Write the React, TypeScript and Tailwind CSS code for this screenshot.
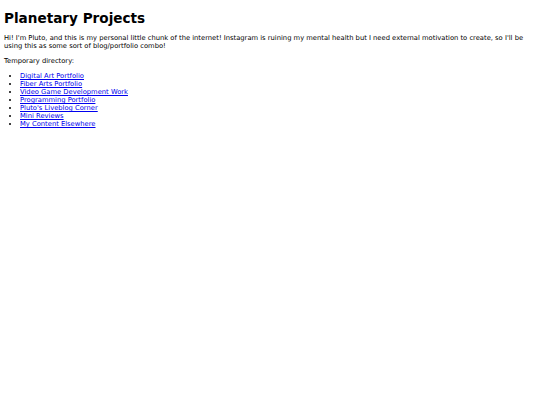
import * as React from "react";

const links = [
  "Digital Art Portfolio",
  "Fiber Arts Portfolio",
  "Video Game Development Work",
  "Programming Portfolio",
  "Pluto's Liveblog Corner",
  "Mini Reviews",
  "My Content Elsewhere",
];

export default function App() {
  return (
    <div className="min-h-screen bg-white p-[4px] text-[6.75px] leading-[8px] text-black [font-family:Verdana,'DejaVu_Sans',sans-serif]">
      <h1 className="mt-[5.5px] mb-[7.5px] text-[13.6px] font-bold leading-[17px]">
        Planetary Projects
      </h1>
      <p className="my-[7px]">
        Hi! I'm Pluto, and this is my personal little chunk of the internet!
        Instagram is ruining my mental health but I need external motivation to
        create, so I'll be using this as some sort of blog/portfolio combo!
      </p>
      <p className="my-[7px]">Temporary directory:</p>
      <ul className="my-[7px] list-disc pl-[16px]">
        {links.map((l) => (
          <li key={l}>
            <a href="#" className="text-[#0000ee] underline">
              {l}
            </a>
          </li>
        ))}
      </ul>
    </div>
  );
}
